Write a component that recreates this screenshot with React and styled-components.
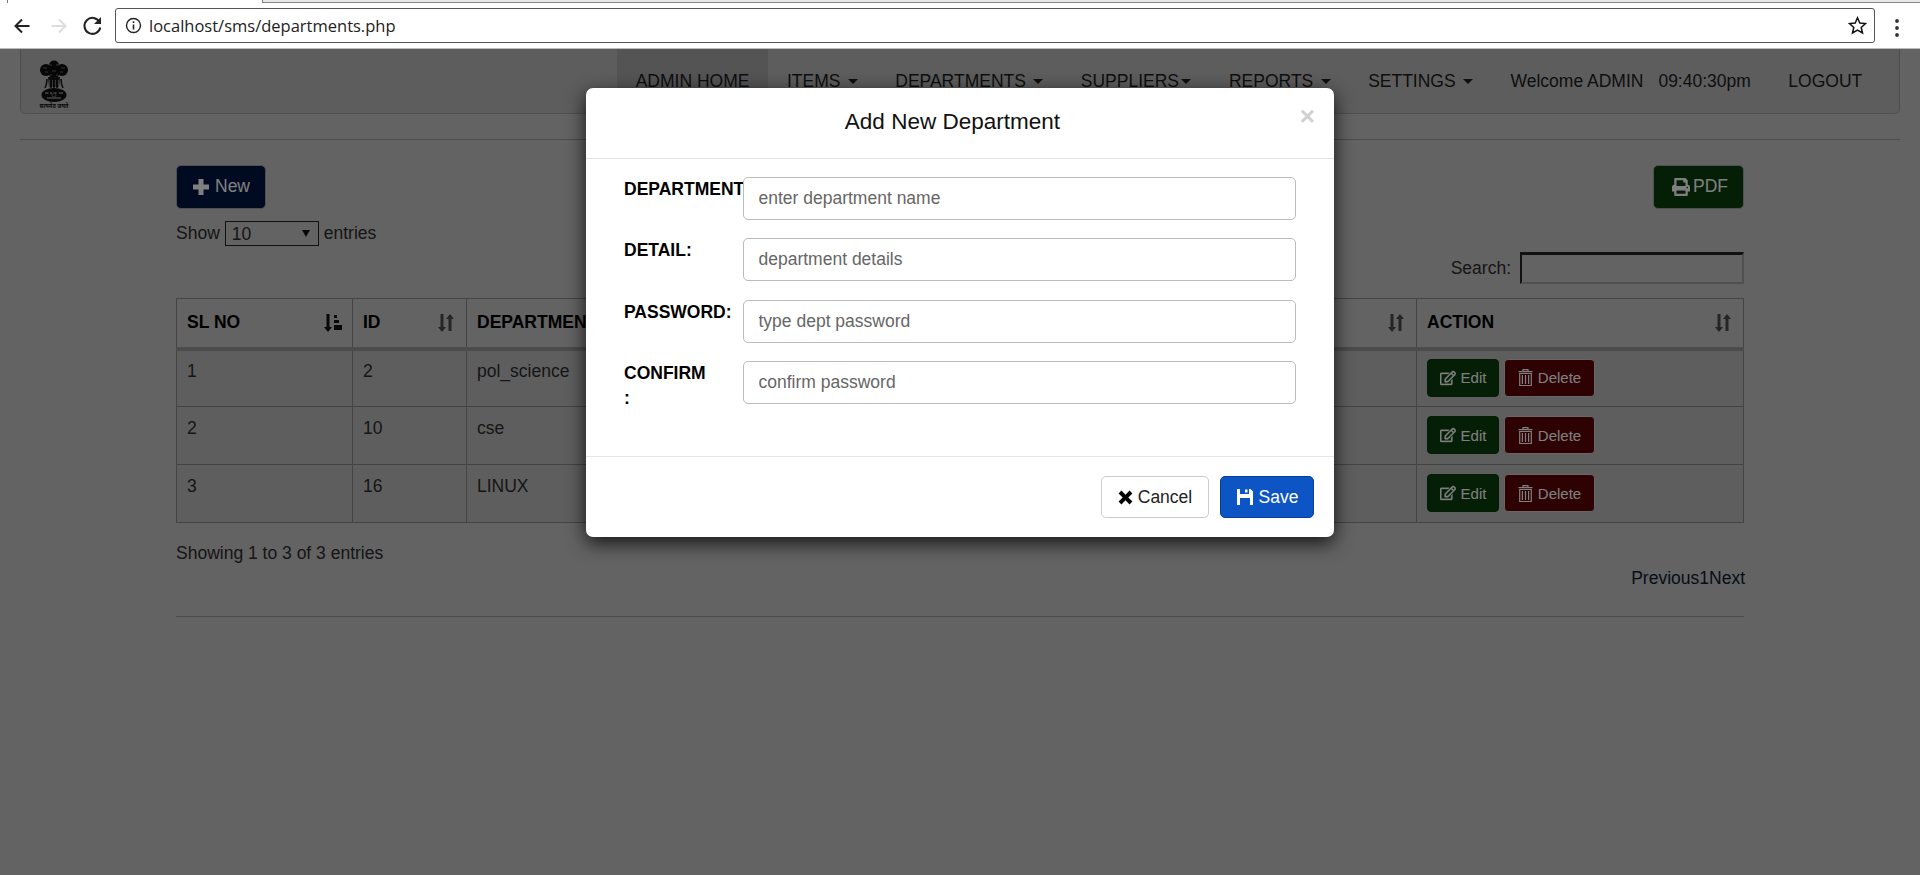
import React from 'react';
import styled, { createGlobalStyle } from 'styled-components';
import { FaPrint, FaRegEdit } from 'react-icons/fa';

const GlobalStyle = createGlobalStyle`
  html, body { margin: 0; padding: 0; background: #fff; }
  body {
    font-family: "Liberation Sans", Arial, sans-serif;
    font-size: 17.5px;
    line-height: 25px;
    color: #2c2c2c;
  }
  * { box-sizing: border-box; }
`;

const Window = styled.div`
  width: 1920px;
  height: 875px;
  display: flex;
  flex-direction: column;
  overflow: hidden;
`;

/* browser chrome */
const TabStrip = styled.div`
  height: 3px;
  display: flex;
  background: #fff;
`;
const TabEdge = styled.div`
  width: 8px;
  border-right: 1px solid #777;
`;
const ActiveTab = styled.div`
  width: 255px;
  border-right: 1px solid #777;
`;
const TabRest = styled.div`
  flex: 1;
  background: #e8e8e8;
  border-bottom: 1px solid #888;
`;
const BrowserBar = styled.div`
  height: 46px;
  display: flex;
  align-items: flex-start;
  padding: 5px 0 0 0;
  background: #fff;
  border-bottom: 1px solid #bbb;
`;
const NavIcon = styled.svg`
  width: 35px;
  height: 34px;
  flex: none;
`;
const NavIcons = styled.div`
  display: flex;
  width: 115px;
  padding-left: 6px;
`;
const AddressBox = styled.div`
  width: 1760px;
  height: 35px;
  display: flex;
  align-items: center;
  padding: 0 7px 0 9px;
  border: 1px solid #555;
  border-radius: 3px;
  background: #fff;
`;
const Url = styled.span`
  flex: 1;
  margin-left: 7px;
  font-family: "Open Sans", sans-serif;
  font-size: 16.5px;
  color: #222;
`;
const Dots = styled.svg`
  width: 45px;
  height: 34px;
`;

/* page under the dialog */
const Viewport = styled.div`
  position: relative;
  flex: 1;
  background: #c6c6c6;
  padding: 0 20px;
`;
const NavBar = styled.nav`
  height: 65px;
  display: flex;
  justify-content: space-between;
  background: #bababa;
  border: 1px solid #9c9c9c;
  border-top: 0;
  border-radius: 0 0 5px 5px;
  padding-right: 18px;
`;
const Emblem = styled.svg`
  width: 30px;
  height: 50px;
  margin: 11px 0 0 18px;
`;
const NavLinks = styled.div`
  display: flex;
`;
const NavLink = styled.a`
  height: 64px;
  display: flex;
  align-items: center;
  padding: 1px ${p => p.$right || '18.75px'} 0 ${p => p.$left || '18.75px'};
  color: #1c1c1c;
  white-space: pre;
  background: ${p => p.$active ? '#a8a8a8' : 'transparent'};
`;
const Caret = styled.i`
  display: inline-block;
  margin-left: 2.5px;
  border-top: 5px solid #1c1c1c;
  border-left: 5px solid transparent;
  border-right: 5px solid transparent;
`;
const Rule = styled.hr`
  margin: ${p => p.$top} 0 ${p => p.$bottom};
  border: 0;
  border-top: 1px solid #999;
`;
const Content = styled.div`
  width: 1568px;
  margin: 0 auto;
`;
const TopRow = styled.div`
  display: flex;
  justify-content: space-between;
`;
const PageButton = styled.button`
  height: 44px;
  display: flex;
  align-items: center;
  gap: ${p => p.$gap};
  padding: 0 15px 0 ${p => p.$lead};
  font: inherit;
  color: #fff;
  background: ${p => p.$bg};
  border: 1px solid #a0a0a0;
  border-radius: 5px;
  svg { flex: none; }
`;
const ShowRow = styled.div`
  margin-top: 12.5px;
  height: 25px;
  display: flex;
  align-items: center;
  gap: 5px;
`;
const SelectWrap = styled.div`
  position: relative;
  &::after {
    content: "";
    position: absolute;
    right: 9px;
    top: 9px;
    border-top: 7px solid #111;
    border-left: 4px solid transparent;
    border-right: 4px solid transparent;
  }
`;
const Select = styled.select`
  appearance: none;
  display: block;
  width: 94px;
  height: 25px;
  padding: 0 0 0 6px;
  font: inherit;
  color: #2c2c2c;
  background: #c6c6c6;
  border: 1px solid #222;
  border-radius: 0;
`;
const SearchRow = styled.div`
  margin-top: 6px;
  height: 32px;
  display: flex;
  justify-content: flex-end;
  align-items: center;
  gap: 9px;
`;
const SearchInput = styled.input`
  width: 224px;
  height: 32px;
  background: #c6c6c6;
  border-style: solid;
  border-width: 3px 2px 2px 2px;
  border-color: #222 #a0a0a0 #a0a0a0 #222;
`;
const Table = styled.table`
  width: 100%;
  margin-top: 14px;
  table-layout: fixed;
  border-collapse: collapse;
`;
const HeadCell = styled.th`
  position: relative;
  width: ${p => p.$w};
  padding: 10px;
  height: 50px;
  text-align: left;
  color: #000;
  border: 1px solid #888;
  border-bottom: 4px solid #999;
`;
const SortMark = styled.svg`
  position: absolute;
  right: 10px;
  top: 14px;
  width: 19px;
  height: 20px;
`;
const Cell = styled.td`
  height: 58px;
  padding: 9px 10px 10px;
  vertical-align: top;
  background: #bcbcbc;
  border: 1px solid #888;
  tr:first-child > & { padding-top: 8px; }
`;
const ActionCell = styled(Cell)`
  padding-bottom: 0;
`;
const Actions = styled.div`
  display: flex;
  gap: 5px;
`;
const SmallButton = styled.button`
  height: 38px;
  width: ${p => p.$w};
  display: flex;
  align-items: center;
  justify-content: center;
  gap: 5px;
  padding: 0;
  font: inherit;
  font-size: 15px;
  color: #fff;
  background: ${p => p.$bg};
  border: 1px solid ${p => p.$line};
  border-radius: 4px;
`;
const Info = styled.div`
  margin-top: 18px;
`;
const Pager = styled.div`
  text-align: right;
  color: #0c1a30;
  margin-right: -1px;
`;

/* dialog */
const Backdrop = styled.div`
  position: absolute;
  inset: 0;
  background: rgba(0, 0, 0, 0.5);
`;
const Modal = styled.div`
  position: absolute;
  left: 586px;
  top: 39px;
  width: 748px;
  height: 449px;
  display: flex;
  flex-direction: column;
  background: #fff;
  border-radius: 7px;
  box-shadow: 0 6px 19px rgba(0, 0, 0, 0.8);
`;
const ModalHead = styled.div`
  height: 71px;
  display: flex;
  padding: 0 19px;
  border-bottom: 1px solid #e5e5e5;
`;
const Title = styled.h4`
  flex: 1;
  margin: 21px 0 0;
  text-align: center;
  font-size: 22.5px;
  line-height: 26px;
  font-weight: 400;
  color: #111;
`;
const Close = styled.span`
  margin-top: 14px;
  font-size: 26px;
  line-height: 28px;
  font-weight: 700;
  color: #d0d0d0;
`;
const ModalBody = styled.div`
  flex: 1;
  padding: 18px 38px 0 38px;
  display: flex;
  flex-direction: column;
  gap: 18.3px;
`;
const Field = styled.div`
  display: grid;
  grid-template-columns: 118.5px 1fr;
`;
const Label = styled.label`
  font-weight: 700;
  color: #000;
  white-space: nowrap;
  overflow: hidden;
`;
const Input = styled.input`
  height: 43px;
  padding: 0 15px;
  font: inherit;
  color: #555;
  background: #fff;
  border: 1px solid #bbb;
  border-radius: 5px;
  &::placeholder { color: #666; opacity: 1; }
`;
const ModalFoot = styled.div`
  height: 81px;
  display: flex;
  justify-content: flex-end;
  gap: 11px;
  padding: 19px 20px 0 0;
  border-top: 1px solid #e5e5e5;
`;
const FootButton = styled.button`
  width: ${p => p.$w};
  height: 42px;
  display: flex;
  align-items: center;
  justify-content: center;
  gap: 5px;
  padding: 0;
  font: inherit;
  color: ${p => p.$primary ? '#fff' : '#222'};
  background: ${p => p.$primary ? '#0d55c4' : '#fff'};
  border: 1px solid ${p => p.$primary ? '#083f96' : '#ccc'};
  border-radius: 5px;
`;

const Plus = () => (
  <svg width="18" height="18" viewBox="0 0 18 18"><path d="M6.500 1h5v5.500H17v5h-5.500V17h-5v-5.500H1v-5h5.500z" fill="#fff" /></svg>
);
const Cross = () => (
  <svg width="15" height="15" viewBox="0 0 15 15"><path d="M3.400.6 7.500 4.700 11.600.6l2.800 2.800-4.100 4.100 4.100 4.100-2.800 2.800-4.100-4.100-4.100 4.100L.6 11.600l4.100-4.100L.6 3.400z" fill="#000" /></svg>
);
const Floppy = () => (
  <svg width="18" height="18" viewBox="0 0 18 18"><path fillRule="evenodd" d="M1 1h3v5h9V1h1.500L17 3.500V17H1zM9 1.500h2.500v3H9zM4 10v7h10v-7z" fill="#fff" /></svg>
);
const Trash = () => (
  <svg width="15" height="17" viewBox="0 0 15 17" fill="none" stroke="#fff" strokeWidth="1.200">
    <path d="M.5 2.600h14M5 2.500V.6h5v1.900M1.700 4.500h11.600v12H1.700zM4.400 6v9M7.500 6v9M10.600 6v9" />
  </svg>
);
const SortBoth = () => (
  <SortMark viewBox="0 0 19 20">
    <path d="M3.500 1h3v13H9l-4 5-4-5h2.500zM11.500 18V6H9l4-5 4 5h-2.500v12z" fill="#4a4a4a" />
  </SortMark>
);
const SortAsc = () => (
  <SortMark viewBox="0 0 19 20">
    <path d="M3.500 1h3v13H9l-4 5-4-5h2.500zM11 2h3v3h-3zM11 7h5v3h-5zM11 12h8v5h-8z" fill="#111" />
  </SortMark>
);

const rows = [
  { sl: 1, id: 2, name: 'pol_science', detail: 'political science' },
  { sl: 2, id: 10, name: 'cse', detail: 'computer science' },
  { sl: 3, id: 16, name: 'LINUX', detail: 'linux' },
];

const fields = [
  { label: 'DEPARTMENT:', hint: 'enter department name' },
  { label: 'DETAIL:', hint: 'department details' },
  { label: 'PASSWORD:', hint: 'type dept password' },
  { label: <>CONFIRM<br />:</>, hint: 'confirm password' },
];

export default function App() {
  return (
    <Window>
      <GlobalStyle />
      <TabStrip>
        <TabEdge />
        <ActiveTab />
        <TabRest />
      </TabStrip>
      <BrowserBar>
        <NavIcons>
          <NavIcon viewBox="0 0 35 34"><path d="M23.500 18H10.500M16 11.500 9.500 18l6.500 6.500" fill="none" stroke="#222" strokeWidth="2" /></NavIcon>
          <NavIcon viewBox="0 0 35 34"><path d="M10.500 18h13M18 11.500 24.500 18 18 24.500" fill="none" stroke="#ddd" strokeWidth="2" /></NavIcon>
          <NavIcon viewBox="0 0 35 34"><path d="M23.500 14a8 8 0 1 0 .8 5.500" fill="none" stroke="#222" strokeWidth="2" /><path d="M25 9v7h-7z" fill="#222" /></NavIcon>
        </NavIcons>
        <AddressBox>
          <svg width="17" height="17" viewBox="0 0 17 17">
            <circle cx="8.500" cy="8.500" r="7" fill="none" stroke="#222" strokeWidth="1.400" />
            <path d="M8.500 7.500v5M8.500 4.300v1.600" stroke="#222" strokeWidth="1.600" />
          </svg>
          <Url>localhost/sms/departments.php</Url>
          <svg width="19" height="19" viewBox="0 0 19 19">
            <path d="m9.500 1.800 2.300 5.300 5.700.5-4.300 3.800 1.300 5.600-5-3-5 3 1.300-5.600L1.500 7.600l5.700-.5z" fill="none" stroke="#111" strokeWidth="1.500" />
          </svg>
        </AddressBox>
        <Dots viewBox="0 0 45 34">
          <circle cx="22" cy="13" r="1.900" fill="#333" />
          <circle cx="22" cy="20" r="1.900" fill="#333" />
          <circle cx="22" cy="27" r="1.900" fill="#333" />
        </Dots>
      </BrowserBar>
      <Viewport>
        <NavBar>
          <Emblem viewBox="0 0 30 50">
            {/* lion capital, small and dark like the reference */}
            <circle cx="15" cy="5.500" r="5" fill="#0d0d0d" />
            <circle cx="7" cy="10" r="6" fill="#0d0d0d" />
            <circle cx="23" cy="10" r="6" fill="#0d0d0d" />
            <circle cx="15" cy="12" r="6" fill="#0d0d0d" />
            <path d="M4 8h4M10 5h3M17 5h3M22 8h4M6 12h3M13 11h4M21 12h3M11 15h2M17 15h2" stroke="#6a6a6a" strokeWidth="1" />
            <path d="M9 17h12l-1 10H10z" fill="#1a1a1a" />
            <path d="M8 19c0 3-.5 6-2 9M22 19c0 3 .5 6 2 9M12 18v10M15 18v10M18 18v10" stroke="#111" strokeWidth="1.500" fill="none" />
            <path d="M10.500 20v7M13.500 20v7M16.500 20v7M19.500 20v7" stroke="#8a8a8a" strokeWidth="0.800" />
            <ellipse cx="15" cy="35" rx="12.500" ry="7" fill="#111" />
            <path d="M6 33h3.500M11 33h2M15.500 33h2M20 33h4M8 38h14" stroke="#8a8a8a" strokeWidth="1.300" />
            <circle cx="15" cy="35" r="2" fill="none" stroke="#8a8a8a" strokeWidth="0.800" />
            <text x="15" y="48" textAnchor="middle" fontSize="5.500" fontWeight="700" fill="#111" fontFamily="'Noto Sans', sans-serif">सत्यमेव जयते</text>
          </Emblem>
          <NavLinks>
            <NavLink $active>ADMIN HOME</NavLink>
            <NavLink>ITEMS <Caret /></NavLink>
            <NavLink>DEPARTMENTS <Caret /></NavLink>
            <NavLink>SUPPLIERS<Caret /></NavLink>
            <NavLink>REPORTS <Caret /></NavLink>
            <NavLink>SETTINGS <Caret /></NavLink>
            <NavLink $right="7.5px">Welcome ADMIN</NavLink>
            <NavLink $left="7.5px">09:40:30pm</NavLink>
            <NavLink>LOGOUT</NavLink>
          </NavLinks>
        </NavBar>
        <Rule $top="25px" $bottom="24.5px" />
        <Content>
          <TopRow>
            <PageButton $bg="#001442" $lead="15px" $gap="5px"><Plus />New</PageButton>
            <PageButton $bg="#0b3f0c" $lead="18px" $gap="3px"><FaPrint size={18} />PDF</PageButton>
          </TopRow>
          <ShowRow>
            Show
            <SelectWrap>
              <Select defaultValue="10"><option>10</option><option>25</option></Select>
            </SelectWrap>
            entries
          </ShowRow>
          <SearchRow>
            Search:
            <SearchInput />
          </SearchRow>
          <Table>
            <thead>
              <tr>
                <HeadCell $w="176px">SL NO<SortAsc /></HeadCell>
                <HeadCell $w="114px">ID<SortBoth /></HeadCell>
                <HeadCell $w="450px">DEPARTMENT NAME<SortBoth /></HeadCell>
                <HeadCell $w="500px">DETAILS<SortBoth /></HeadCell>
                <HeadCell>ACTION<SortBoth /></HeadCell>
              </tr>
            </thead>
            <tbody>
              {rows.map(row => (
                <tr key={row.id}>
                  <Cell>{row.sl}</Cell>
                  <Cell>{row.id}</Cell>
                  <Cell>{row.name}</Cell>
                  <Cell>{row.detail}</Cell>
                  <ActionCell>
                    <Actions>
                      <SmallButton $w="72px" $bg="#0b3f0c" $line="#0a380b"><FaRegEdit size={16} stroke="currentColor" strokeWidth={12} />Edit</SmallButton>
                      <SmallButton $w="91px" $bg="#5c0407" $line="#cfcfcf"><Trash />Delete</SmallButton>
                    </Actions>
                  </ActionCell>
                </tr>
              ))}
            </tbody>
          </Table>
          <Info>Showing 1 to 3 of 3 entries</Info>
          <Pager>Previous1Next</Pager>
          <Rule $top="25px" $bottom="0" />
        </Content>
        <Backdrop />
        <Modal>
          <ModalHead>
            <Title>Add New Department</Title>
            <Close>×</Close>
          </ModalHead>
          <ModalBody>
            {fields.map(field => (
              <Field key={field.hint}>
                <Label>{field.label}</Label>
                <Input placeholder={field.hint} />
              </Field>
            ))}
          </ModalBody>
          <ModalFoot>
            <FootButton $w="108px"><Cross />Cancel</FootButton>
            <FootButton $w="94px" $primary><Floppy />Save</FootButton>
          </ModalFoot>
        </Modal>
      </Viewport>
    </Window>
  );
}
